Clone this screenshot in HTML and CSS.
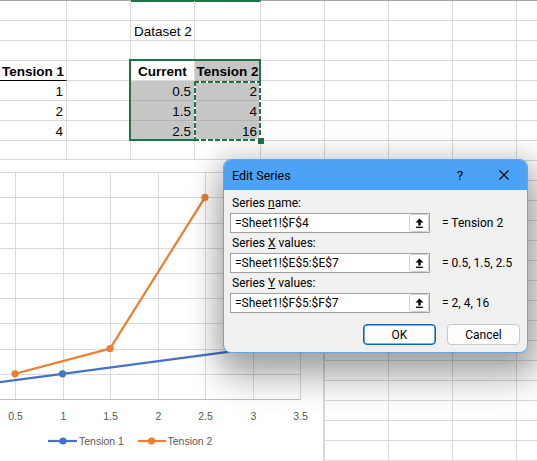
FILE: index.html
```html
<!DOCTYPE html>
<html lang="en">

<head>
    <meta charset="UTF-8">
    <meta name="viewport" content="width=device-width, initial-scale=1.0">
    <title>Edit Series</title>
    <link rel="stylesheet" href="styles.css">
</head>

<body>
    <div class="viewport">
        <!-- Worksheet (cells are filled in by the script below) -->
        <div class="sheet" id="sheet">
            <div class="selection"></div>
            <div class="copy-marquee"></div>
        </div>

        <!-- Embedded chart -->
        <div class="chart">
            <svg width="323" height="310" viewBox="0 0 323 310">
                <path class="gridlines" d="M0 12.5H300 M0 37.5H300 M0 63.5H300 M0 88.5H300 M0 113.5H300 M0 138.5H300 M0 163.5H300 M0 189.5H300 M0 214.5H300
                         M15.5 12V239 M63.5 12V239 M110.5 12V239 M158.5 12V239 M205.5 12V239 M253.5 12V239 M300.5 12V239" />
                <path class="axis" d="M0 239.5H301" />

                <!-- Tension 1 -->
                <path class="series blue" d="M-32.5 226.4 L62.5 213.8 L252.5 188.6" />
                <circle class="marker blue" cx="62.5" cy="213.8" r="3.6" />
                <circle class="marker blue" cx="252.5" cy="188.6" r="3.6" />

                <!-- Tension 2 -->
                <path class="series orange" d="M15 213.8 L110 188.6 L205 37.4" />
                <circle class="marker orange" cx="15" cy="213.8" r="3.6" />
                <circle class="marker orange" cx="110" cy="188.6" r="3.6" />
                <circle class="marker orange" cx="205" cy="37.4" r="3.6" />

                <!-- X axis labels -->
                <g class="axis-label">
                    <text x="15.5" y="259.5">0.5</text>
                    <text x="63.5" y="259.5">1</text>
                    <text x="110.5" y="259.5">1.5</text>
                    <text x="158.5" y="259.5">2</text>
                    <text x="205.5" y="259.5">2.5</text>
                    <text x="253.5" y="259.5">3</text>
                    <text x="300.5" y="259.5">3.5</text>
                </g>

                <!-- Legend -->
                <path class="series blue" d="M48 281H77" />
                <circle class="marker blue" cx="63" cy="281" r="3.6" />
                <text class="legend-label" x="79" y="284.5">Tension 1</text>
                <path class="series orange" d="M138 281H166" />
                <circle class="marker orange" cx="151.5" cy="281" r="3.6" />
                <text class="legend-label" x="167.5" y="284.5">Tension 2</text>
            </svg>
        </div>
    </div>

    <!-- Edit Series dialog -->
    <div class="dialog">
        <div class="dialog-title">
            <span class="dialog-caption">Edit Series</span>
            <span class="title-btn help-btn">?</span>
            <span class="title-btn close-btn">
                <svg width="10" height="10" viewBox="0 0 10 10">
                    <path d="M0.5 0.5L9.5 9.5M9.5 0.5L0.5 9.5" />
                </svg>
            </span>
        </div>

        <div class="dialog-body">
            <div class="field">
                <div class="field-label">Series <u>n</u>ame:</div>
                <div class="field-row">
                    <div class="ref-input">
                        <span class="ref-text">=Sheet1!$F$4</span>
                        <span class="ref-btn">
                            <svg width="9" height="10" viewBox="0 0 9 10">
                                <path d="M4.5 0.5L8.5 4.5H5.7V7.5H3.3V4.5H0.5Z" />
                                <rect x="1" y="8.7" width="7" height="1.3" />
                            </svg>
                        </span>
                    </div>
                    <span class="ref-value">= Tension 2</span>
                </div>
            </div>

            <div class="field">
                <div class="field-label">Series <u>X</u> values:</div>
                <div class="field-row">
                    <div class="ref-input">
                        <span class="ref-text">=Sheet1!$E$5:$E$7</span>
                        <span class="ref-btn">
                            <svg width="9" height="10" viewBox="0 0 9 10">
                                <path d="M4.5 0.5L8.5 4.5H5.7V7.5H3.3V4.5H0.5Z" />
                                <rect x="1" y="8.7" width="7" height="1.3" />
                            </svg>
                        </span>
                    </div>
                    <span class="ref-value">= 0.5, 1.5, 2.5</span>
                </div>
            </div>

            <div class="field">
                <div class="field-label">Series <u>Y</u> values:</div>
                <div class="field-row">
                    <div class="ref-input">
                        <span class="ref-text">=Sheet1!$F$5:$F$7</span>
                        <span class="ref-btn">
                            <svg width="9" height="10" viewBox="0 0 9 10">
                                <path d="M4.5 0.5L8.5 4.5H5.7V7.5H3.3V4.5H0.5Z" />
                                <rect x="1" y="8.7" width="7" height="1.3" />
                            </svg>
                        </span>
                    </div>
                    <span class="ref-value">= 2, 4, 16</span>
                </div>
            </div>

            <div class="dialog-actions">
                <button class="btn btn-primary">OK</button>
                <button class="btn">Cancel</button>
            </div>
        </div>
    </div>

    <script>
        // Cell contents keyed by address
        const sheetData = {
            E2: { text: "Dataset 2" },
            C4: { text: "Tension 1", cls: "head underline" },
            E4: { text: "Current", cls: "head" },
            F4: { text: "Tension 2", cls: "head shaded" },
            C5: { text: "1", cls: "num" },
            C6: { text: "2", cls: "num" },
            C7: { text: "4", cls: "num" },
            E5: { text: "0.5", cls: "num shaded" },
            E6: { text: "1.5", cls: "num shaded" },
            E7: { text: "2.5", cls: "num shaded" },
            F5: { text: "2", cls: "num shaded" },
            F6: { text: "4", cls: "num shaded" },
            F7: { text: "16", cls: "num shaded" }
        };

        const columns = "CDEFGHIJK";
        const rowCount = 24;
        const sheet = document.getElementById("sheet");

        for (let row = 1; row <= rowCount; row++) {
            for (const col of columns) {
                const cell = document.createElement("div");
                const data = sheetData[col + row];
                cell.className = "cell";
                if (data) {
                    cell.textContent = data.text;
                    if (data.cls) cell.className += " " + data.cls;
                }
                if (row === 1 && (col === "E" || col === "F")) {
                    cell.classList.add("col-active");
                }
                sheet.appendChild(cell);
            }
        }
    </script>
</body>

</html>
```

FILE: styles.css
```css
body {
    margin: 0;
    width: 537px;
    height: 461px;
    overflow: hidden;
    position: relative;
    background: #fff;
    font-family: "Liberation Sans", Arial, sans-serif;
}

.viewport {
    position: relative;
    width: 537px;
    height: 461px;
    overflow: hidden;
}

/* Worksheet */
.sheet {
    position: relative;
    display: grid;
    grid-template-columns: 67px 64px 64px 66px repeat(5, 64px);
    grid-auto-rows: 20px;
    width: max-content;
    border-top: 1px solid #a6a6a6;
    font-size: 13.5px;
    color: #000;
}

.cell {
    display: flex;
    align-items: flex-end;
    padding: 0 3px 1px;
    border-right: 1px solid #dadada;
    border-bottom: 1px solid #dadada;
    line-height: 15px;
    white-space: nowrap;
    overflow: hidden;
}

.col-active {
    box-shadow: 0 -1px 0 #217346, inset 0 1px 0 #217346;
}

.num {
    justify-content: flex-end;
}

.head {
    justify-content: center;
    font-weight: bold;
    padding: 0 0 1px;
}

.underline {
    border-bottom-color: #000;
}

.shaded {
    background: #c6c6c6;
    border-color: #b2b2b2;
}

/* Active range + copy marquee */
.selection {
    position: absolute;
    grid-area: 4 / 3 / 8 / 5;
    inset: -2px 0 0 -2px;
    border: 2px solid #217346;
    z-index: 1;
}

.copy-marquee {
    position: absolute;
    grid-area: 5 / 4 / 8 / 5;
    inset: 0 0 0 -1px;
    z-index: 1;
    background:
        repeating-linear-gradient(90deg, #217346 0 5px, #fff 5px 7px) top left / 100% 2px no-repeat,
        repeating-linear-gradient(90deg, #217346 0 5px, #fff 5px 7px) bottom left / 100% 2px no-repeat,
        repeating-linear-gradient(180deg, #217346 0 5px, #fff 5px 7px) top left / 2px 100% no-repeat,
        repeating-linear-gradient(180deg, #217346 0 5px, #fff 5px 7px) top right / 2px 100% no-repeat;
}

.copy-marquee::after {
    content: "";
    position: absolute;
    right: -3px;
    bottom: -3px;
    width: 6px;
    height: 6px;
    background: #217346;
    box-shadow: -1px -1px 0 #fff;
}

/* Chart */
.chart {
    position: absolute;
    left: -1px;
    top: 159px;
    width: 323px;
    height: 310px;
    background: #fff;
    border: 1px solid #d9d9d9;
}

.chart svg {
    display: block;
    overflow: visible;
}

.gridlines {
    fill: none;
    stroke: #d9d9d9;
    stroke-width: 1;
}

.axis {
    fill: none;
    stroke: #bfbfbf;
    stroke-width: 1;
}

.series {
    fill: none;
    stroke-width: 2.2;
    stroke-linejoin: round;
}

.series.blue {
    stroke: #4472c4;
}

.series.orange {
    stroke: #ed7d31;
}

.marker.blue {
    fill: #4472c4;
}

.marker.orange {
    fill: #ed7d31;
}

.axis-label text {
    font-family: "Liberation Sans", Arial, sans-serif;
    font-size: 10.5px;
    fill: #595959;
    text-anchor: middle;
}

.legend-label {
    font-family: "Liberation Sans", Arial, sans-serif;
    font-size: 10.5px;
    fill: #595959;
}

/* Dialog */
.dialog {
    position: absolute;
    left: 223px;
    top: 159px;
    width: 305px;
    height: 194px;
    box-sizing: border-box;
    border: 1px solid #5aa7f2;
    border-radius: 8px;
    overflow: hidden;
    background: #f0f0f0;
    box-shadow: 0 0 22px 9px rgba(0, 0, 0, 0.1), 3px 20px 34px 6px rgba(0, 0, 0, 0.3);
    font-family: Roboto, "Liberation Sans", sans-serif;
    font-size: 12px;
    color: #000;
    z-index: 5;
}

.dialog-title {
    display: flex;
    align-items: center;
    height: 30px;
    padding-left: 8px;
    background: #4ca3f6;
}

.dialog-caption {
    font-size: 12.5px;
}

.title-btn {
    display: flex;
    align-items: center;
    justify-content: center;
    height: 30px;
}

.help-btn {
    margin-left: auto;
    width: 42px;
    font-size: 13.5px;
}

.close-btn {
    width: 46px;
}

.close-btn path {
    stroke: #000;
    stroke-width: 1.1;
}

.dialog-body {
    padding: 6px 7px 0 6px;
}

.field + .field {
    margin-top: 3px;
}

.field-label {
    padding-left: 2px;
    line-height: 15px;
}

.field-row {
    display: flex;
    align-items: center;
    margin-top: 2px;
}

.ref-input {
    display: flex;
    align-items: center;
    width: 200px;
    height: 20px;
    box-sizing: border-box;
    border: 1px solid #a0a0a0;
    background: #fff;
}

.ref-text {
    padding-left: 4px;
}

.ref-btn {
    display: flex;
    align-items: center;
    justify-content: center;
    margin-left: auto;
    width: 20px;
    height: 18px;
    box-sizing: border-box;
    border: 1px solid #d0d0d0;
    border-radius: 3px;
    background: #fff;
}

.ref-btn svg {
    fill: #000;
}

.ref-value {
    margin-left: 12px;
}

.dialog-actions {
    display: flex;
    justify-content: flex-end;
    gap: 11px;
    margin-top: 11px;
}

.btn {
    width: 73px;
    height: 21px;
    padding: 0;
    border: 1px solid #c8c8c8;
    border-radius: 4px;
    background: #fdfdfd;
    font-family: Roboto, "Liberation Sans", sans-serif;
    font-size: 12px;
    color: #000;
}

.btn-primary {
    border-color: #0067c0;
    box-shadow: inset 0 0 0 0.6px #0067c0;
}
```
